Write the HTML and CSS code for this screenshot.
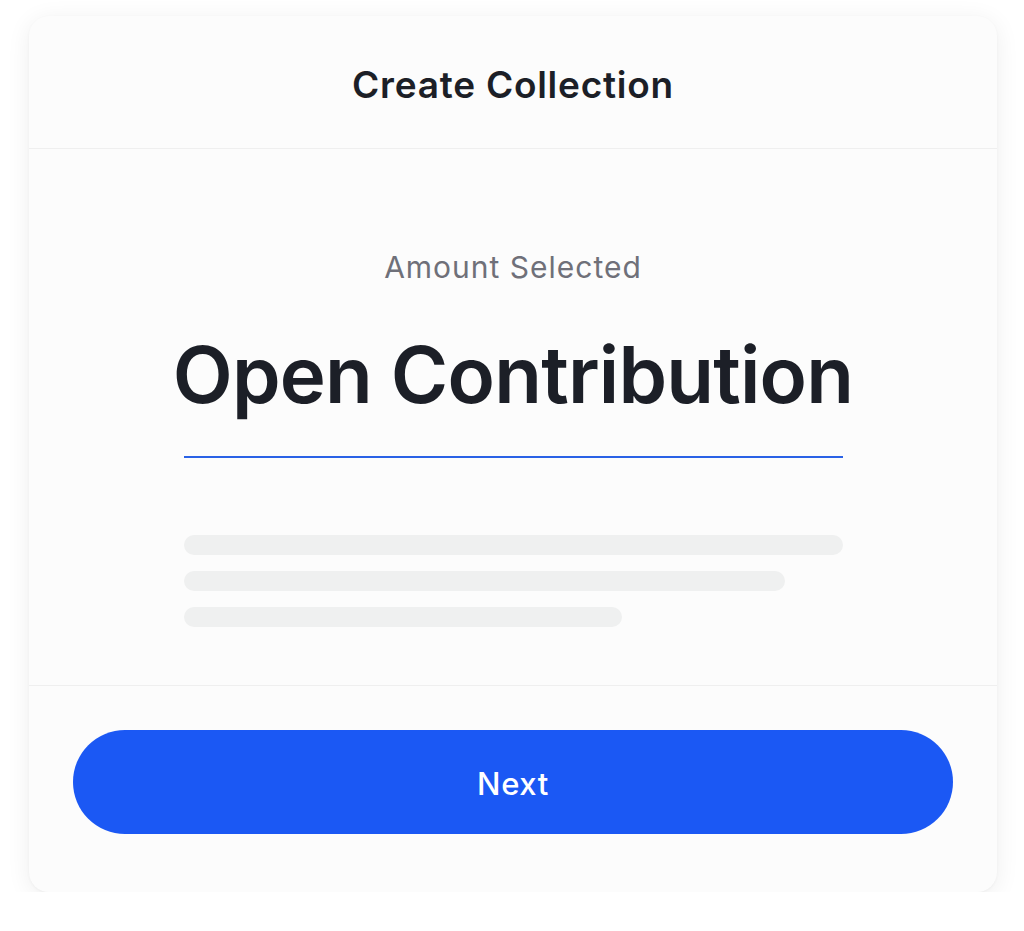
FILE: index.html
```html
<!DOCTYPE html>
<html>
<head>
<meta charset="utf-8">
<link rel="stylesheet" href="styles.css">
</head>
<body>
<div class="card">
  <div class="header"><h1 class="title">Create Collection</h1></div>
  <div class="content">
    <div class="label">Amount Selected</div>
    <div class="amount">Open Contribution</div>
    <div class="underline"></div>
    <div class="skeleton">
      <div class="bar bar1"></div>
      <div class="bar bar2"></div>
      <div class="bar bar3"></div>
    </div>
  </div>
  <div class="footer"><button class="next">Next</button></div>
</div>
</body>
</html>
```
FILE: styles.css
```css
html, body { margin: 0; padding: 0; background: #ffffff; }
body { font-family: "Inter", "Noto Sans", sans-serif; color: #1c1f27; }
.card {
  box-sizing: border-box;
  margin: 16px 0 0 29px;
  width: 968px;
  height: 876px;
  background: #fcfcfc;
  border-radius: 20px;
  box-shadow: 0 4px 24px rgba(0,0,0,0.07), 0 1px 3px rgba(0,0,0,0.04);
  display: flex;
  flex-direction: column;
}
.header {
  height: 133px;
  padding-top: 4px;
  box-sizing: border-box;
  border-bottom: 1px solid #efefef;
  display: flex;
  align-items: center;
  justify-content: center;
}
.title { margin: 0; font-size: 37px; font-weight: 600; letter-spacing: 0.75px; }
.content {
  height: 537px;
  border-bottom: 1px solid #efefef;
  display: flex;
  flex-direction: column;
  align-items: center;
  padding-top: 100px;
  box-sizing: border-box;
}
.label { font-size: 30px; color: #6f7079; line-height: 36px; letter-spacing: 1px; }
.amount { font-size: 78px; font-weight: 600; line-height: 96px; margin-top: 42px; letter-spacing: -0.8px; }
.underline { width: 659px; height: 2px; background: #2a62e6; margin-top: 33px; }
.skeleton { width: 659px; display: flex; flex-direction: column; gap: 16px; margin-top: 77px; }
.bar { height: 20px; border-radius: 10px; background: #eff0f0; }
.bar1 { width: 659px; }
.bar2 { width: 601px; }
.bar3 { width: 438px; }
.footer { flex: 1; display: flex; align-items: flex-start; padding: 44px 44px 0; }
.next {
  width: 100%;
  height: 104px;
  border: none;
  border-radius: 52px;
  background: #1b58f4;
  color: #ffffff;
  font-family: inherit;
  font-size: 31px;
  font-weight: 500;
  letter-spacing: 0.6px;
  padding-top: 4px;
}
```
